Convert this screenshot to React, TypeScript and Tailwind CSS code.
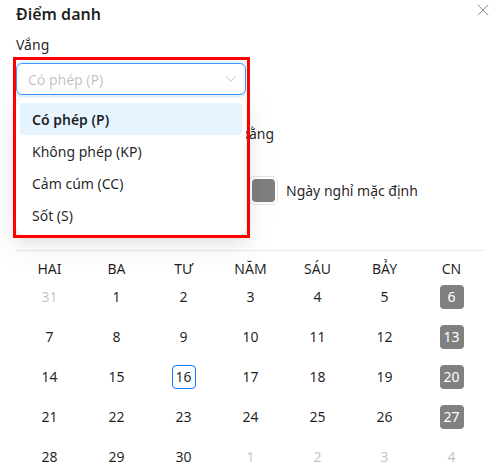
import React from 'react';
import { X, ChevronDown } from 'lucide-react';

const weekDays = ['HAI', 'BA', 'TƯ', 'NĂM', 'SÁU', 'BẢY', 'CN'];

type Day = { d: number; muted?: boolean };

const weeks: Day[][] = [
  [{ d: 31, muted: true }, { d: 1 }, { d: 2 }, { d: 3 }, { d: 4 }, { d: 5 }, { d: 6 }],
  [{ d: 7 }, { d: 8 }, { d: 9 }, { d: 10 }, { d: 11 }, { d: 12 }, { d: 13 }],
  [{ d: 14 }, { d: 15 }, { d: 16 }, { d: 17 }, { d: 18 }, { d: 19 }, { d: 20 }],
  [{ d: 21 }, { d: 22 }, { d: 23 }, { d: 24 }, { d: 25 }, { d: 26 }, { d: 27 }],
  [{ d: 28 }, { d: 29 }, { d: 30 }, { d: 1, muted: true }, { d: 2, muted: true }, { d: 3, muted: true }, { d: 4, muted: true }],
];

const options = ['Có phép (P)', 'Không phép (KP)', 'Cảm cúm (CC)', 'Sốt (S)'];

export default function App() {
  return (
    <div
      className="relative w-[501px] h-[475px] overflow-hidden bg-white px-4 pt-[2px] text-[14px] text-[#000000e0]"
      style={{ fontFamily: '"Noto Sans", "Open Sans", sans-serif' }}
    >
      <button className="absolute right-[8px] top-0 text-[#00000073]">
        <X size={20} strokeWidth={1.2} />
      </button>

      <h1 className="h-6 leading-6 text-[16px] font-semibold">Điểm danh</h1>

      <div className="mt-2 h-[22px] leading-[22px]">Vắng</div>

      <div className="mt-[7px] flex h-8 w-[230px] items-center justify-between rounded-md border border-[#4096ff] pl-[11px] pr-[5px] shadow-[0_0_0_2px_rgba(5,145,255,0.1)]">
        <span className="text-[#00000040]">Có phép (P)</span>
        <ChevronDown size={18} strokeWidth={1.3} className="text-[#00000040]" />
      </div>

      {/* mostly hidden behind the open dropdown */}
      <div className="mt-7 flex h-[22px] w-[258px] items-center justify-end leading-[22px] whitespace-nowrap">
        Đánh dấu bằng
      </div>

      <div className="mt-[29px] grid h-8 grid-cols-[233px_1fr] items-center">
        <div />
        <div className="flex items-center gap-2">
          <span className="flex h-[29px] w-[29px] items-center justify-center rounded-md border border-[#e5e5e5] p-[2px]">
            <span className="h-full w-full rounded bg-[#7f7f7f]" />
          </span>
          <span>Ngày nghỉ mặc định</span>
        </div>
      </div>

      <div className="mt-[44px] h-px bg-[#ececec]" />

      <div className="mt-[10px] grid h-4 grid-cols-7 items-center text-center leading-4">
        {weekDays.map((w) => (
          <div key={w}>{w}</div>
        ))}
      </div>

      {weeks.map((week, wi) => (
        <div key={wi} className="grid h-10 grid-cols-7 items-center text-center">
          {week.map((day, di) => {
            const sunday = di === 6 && !day.muted;
            const today = !day.muted && day.d === 16;
            return (
              <div key={di} className="flex justify-center">
                <span
                  className={`flex h-6 min-w-6 items-center justify-center rounded px-[2px] leading-6 ${
                    day.muted ? 'text-[#00000040]' : ''
                  } ${sunday ? 'bg-[#808080] text-white' : ''} ${
                    today ? 'border border-[#1677ff]' : ''
                  }`}
                >
                  {day.d}
                </span>
              </div>
            );
          })}
        </div>
      ))}

      <div className="absolute left-4 top-[99px] w-[230px] rounded-lg bg-white p-1 shadow-[0_6px_16px_0_rgba(0,0,0,0.08),0_3px_6px_-4px_rgba(0,0,0,0.12),0_9px_28px_8px_rgba(0,0,0,0.05)]">
        {options.map((o, i) => (
          <div
            key={o}
            className={`flex h-8 items-center rounded px-3 ${
              i === 0 ? 'bg-[#e6f4ff] font-semibold' : ''
            }`}
          >
            {o}
          </div>
        ))}
      </div>

      <div className="pointer-events-none absolute left-[13px] top-[57px] h-[181px] w-[237px] border-[3px] border-[#ff0000]" />
    </div>
  );
}
